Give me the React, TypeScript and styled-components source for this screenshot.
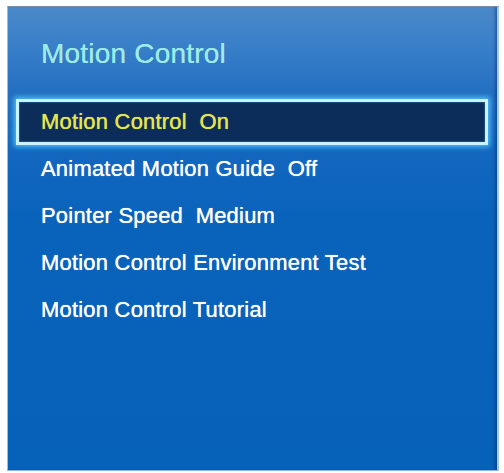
import React from "react";
import styled, { createGlobalStyle } from "styled-components";

const Global = createGlobalStyle`
  html, body { margin: 0; padding: 0; background: #ffffff; }
  body { font-family: "Liberation Sans", Arial, sans-serif; }
`;

const Page = styled.div`
  width: 504px;
  height: 473px;
  padding: 6px 5px 2px 7px;
  box-sizing: border-box;
  background: #ffffff;
`;

const Panel = styled.div`
  width: 492px;
  height: 465px;
  box-sizing: border-box;
  padding: 31px 9px 0 8px;
  display: flex;
  flex-direction: column;
  border-top: 1px solid #7c8a9c;
  border-left: 1px solid #9dbbe0;
  border-right: 2px solid #a8c8ea;
  border-bottom: 1px solid #8fb3dc;
  background: linear-gradient(
    180deg,
    #4a89c9 0%,
    #3a80c9 8%,
    #2570c2 18%,
    #1467bf 30%,
    #0a63bb 45%,
    #0661b8 100%
  );
  box-shadow: inset -4px 0 3px -2px rgba(0, 40, 110, 0.45);
`;

const Title = styled.h1`
  margin: 0 0 28px 0;
  padding-left: 25px;
  font-family: "Liberation Sans", Arial, sans-serif;
  font-weight: normal;
  font-size: 28px;
  line-height: 32px;
  color: #9debe6;
  letter-spacing: 0.2px;
  text-shadow: 0 0 0.6px #9debe6;
`;

const List = styled.ul`
  list-style: none;
  margin: 0;
  padding: 0;
  display: flex;
  flex-direction: column;
`;

const Row = styled.li<{ $active?: boolean }>`
  height: 47px;
  line-height: 47px;
  padding-left: 25px;
  box-sizing: border-box;
  font-family: "Liberation Sans", Arial, sans-serif;
  font-size: 22px;
  letter-spacing: 0.2px;
  color: ${(p) => (p.$active ? "#e6e64c" : "#ffffff")};
  text-shadow: 0 0 0.7px ${(p) => (p.$active ? "#e6e64c" : "#ffffff")};
  white-space: pre;
  position: relative;
  ${(p) =>
    p.$active &&
    `
    &::before {
      content: "";
      position: absolute;
      left: 0;
      right: 0;
      top: 1px;
      bottom: 0;
      background: #0c2d5a;
      border: 3px solid #c9f4ff;
      box-shadow: 0 0 5px 2px rgba(90, 205, 255, 0.85), inset 0 0 2px rgba(120, 220, 255, 0.6);
      z-index: 0;
    }
  `}
`;

const Label = styled.span`
  position: relative;
  z-index: 1;
`;

const items: { label: string; active?: boolean }[] = [
  { label: "Motion Control  On", active: true },
  { label: "Animated Motion Guide  Off" },
  { label: "Pointer Speed  Medium" },
  { label: "Motion Control Environment Test" },
  { label: "Motion Control Tutorial" },
];

export default function App() {
  return (
    <>
      <Global />
      <Page>
        <Panel>
          <Title>Motion Control</Title>
          <List>
            {items.map((it) => (
              <Row key={it.label} $active={it.active}>
                <Label>{it.label}</Label>
              </Row>
            ))}
          </List>
        </Panel>
      </Page>
    </>
  );
}
